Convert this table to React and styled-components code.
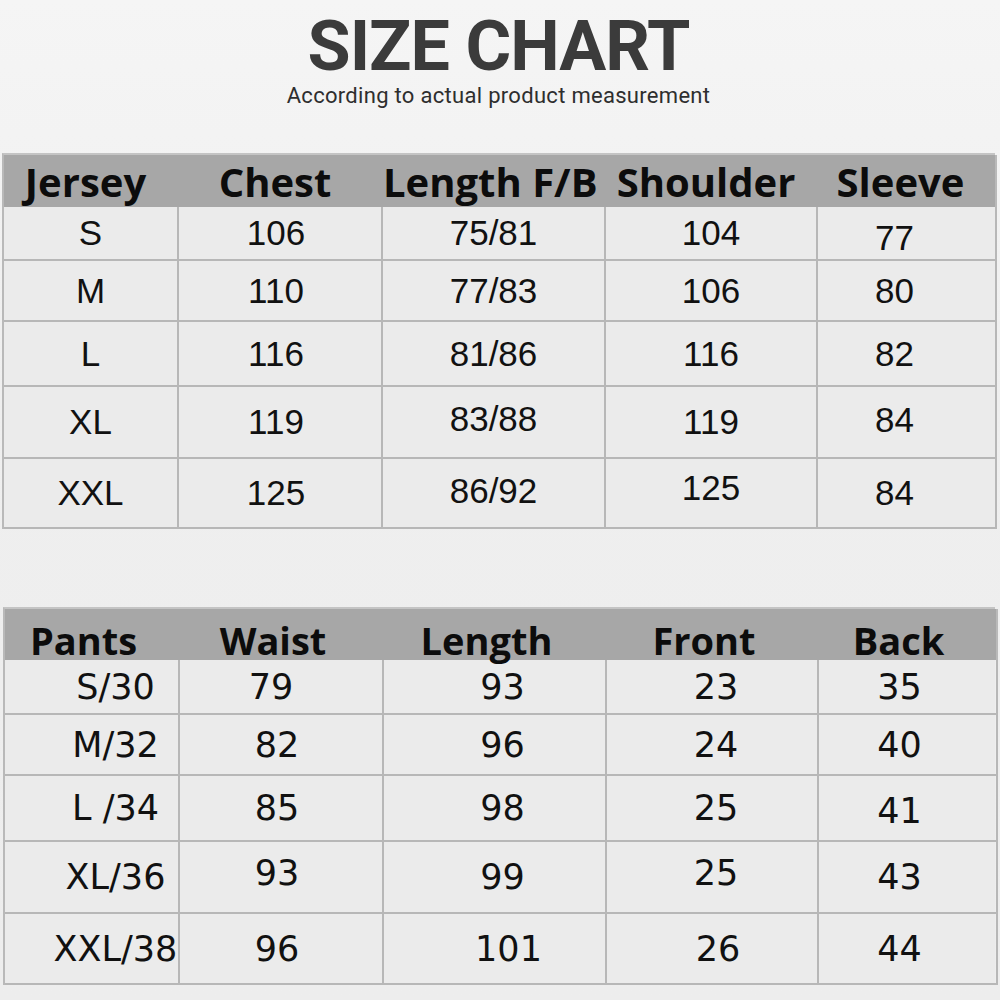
import React from 'react';
import styled, { createGlobalStyle } from 'styled-components';

const GlobalStyle = createGlobalStyle`
  html, body {
    margin: 0;
    padding: 0;
    background: #f1f1f1;
  }
  * {
    box-sizing: border-box;
  }
`;

const Page = styled.div`
  width: 1000px;
  height: 1000px;
  padding: 0 5px 0 2px;
  background: linear-gradient(180deg, #f5f5f5 0%, #efefef 40%, #ededed 100%);
  overflow: hidden;
`;

const Heading = styled.header`
  display: flex;
  flex-direction: column;
  align-items: center;
  height: 153px;
`;

const Title = styled.h1`
  margin: 11px 0 0;
  font-family: Roboto, "Liberation Sans", sans-serif;
  font-weight: 700;
  font-size: 70px;
  line-height: 70px;
  letter-spacing: -1px;
  color: #3b3b3b;
`;

const Subtitle = styled.p`
  margin: 3px 0 0;
  font-family: Roboto, "Liberation Sans", sans-serif;
  font-size: 22px;
  line-height: 24px;
  letter-spacing: 0.3px;
  color: #2e2e2e;
`;

const Table = styled.div`
  display: grid;
  grid-template-columns: 175px 204px 223px 212px 179px;
  grid-template-rows: ${(p) => p.$rows};
  margin: ${(p) => p.$margin};
  border-left: 2px solid #b9b9b9;
  border-top: 2px solid #c4c4c4;
  background: #ebebeb;
`;

const HeadCell = styled.div`
  background: #a7a7a7;
  padding-top: ${(p) => p.$pad}px;
  padding-right: ${(p) => p.$shift}px;
  text-align: center;
  font-family: "Open Sans", "DejaVu Sans", sans-serif;
  font-weight: 700;
  font-size: ${(p) => p.$size}px;
  line-height: ${(p) => p.$size}px;
  color: #0c0c0c;
  white-space: nowrap;
  position: relative;
  z-index: 1;
  border-right: ${(p) => (p.$last ? '2px solid #b9b9b9' : 'none')};
`;

const Cell = styled.div`
  display: flex;
  align-items: center;
  justify-content: center;
  padding-left: ${(p) => p.$indent || 0}px;
  border-right: 2px solid #b7b7b7;
  border-bottom: 2px solid #b7b7b7;
  font-family: ${(p) => p.$font};
  font-size: 35px;
  color: #111;
  white-space: nowrap;
`;

const CellText = styled.span`
  position: relative;
  top: ${(p) => p.$dy || 0}px;
  left: ${(p) => p.$dx || 0}px;
`;

const jersey = {
  head: ['Jersey', 'Chest', 'Length F/B', 'Shoulder', 'Sleeve'],
  rows: [
    ['S', ['106', 0, -4], '75/81', '104', ['77', 5, -12]],
    ['M', ['110', 0, -4], '77/83', '106', ['80', 0, -12]],
    ['L', ['116', 0, -4], '81/86', '116', ['82', 0, -12]],
    ['XL', ['119', 0, -4], ['83/88', -3], '119', ['84', -2, -12]],
    ['XXL', ['125', 0, -4], ['86/92', -2], ['125', -5], ['84', 0, -12]],
  ],
};

const pants = {
  head: ['Pants', 'Waist', 'Length', 'Front', 'Back'],
  rows: [
    ['S/30', ['79', 0, -10], ['93', 0, 8], ['23', 0, 4], ['35', 0, -8]],
    ['M/32', ['82', 0, -4], ['96', 0, 8], ['24', 0, 4], ['40', 0, -8]],
    ['L /34', ['85', 0, -4], ['98', 0, 8], ['25', 0, 4], ['41', 3, -8]],
    ['XL/36', ['93', -4, -4], ['99', 0, 8], ['25', -4, 4], ['43', 0, -8]],
    ['XXL/38', ['96', 0, -4], ['101', 0, 14], ['26', 0, 6], ['44', 0, -8]],
  ],
};

const SizeTable = ({ data, rows, margin, headSize, headPad, headShift, font, firstIndent }) => (
  <Table $rows={rows} $margin={margin}>
    {data.head.map((h, i) => (
      <HeadCell
        key={h}
        $size={headSize}
        $pad={headPad}
        $shift={headShift}
        $last={i === data.head.length - 1}
      >
        {h}
      </HeadCell>
    ))}
    {data.rows.map((row, r) =>
      row.map((value, c) => {
        const [text, dy, dx] = Array.isArray(value) ? value : [value, 0, 0];
        return (
          <Cell key={`${r}-${c}`} $font={font} $indent={c === 0 ? firstIndent : 0}>
            <CellText $dy={dy} $dx={dx}>{text}</CellText>
          </Cell>
        );
      })
    )}
  </Table>
);

const App = () => (
  <>
    <GlobalStyle />
    <Page>
      <Heading>
        <Title>SIZE CHART</Title>
        <Subtitle>According to actual product measurement</Subtitle>
      </Heading>

      <SizeTable
        data={jersey}
        rows="52px 54px 61px 65px 72px 70px"
        margin="0"
        headSize={40}
        headPad={7}
        headShift={12}
        font={'"Liberation Sans", Arial, sans-serif'}
        firstIndent={0}
      />

      <SizeTable
        data={pants}
        rows="51px 55px 61px 66px 72px 71px"
        margin="78px 0 0 1px"
        headSize={38}
        headPad={12}
        headShift={18}
        font={'"DejaVu Sans", Verdana, sans-serif'}
        firstIndent={48}
      />
    </Page>
  </>
);

export default App;
